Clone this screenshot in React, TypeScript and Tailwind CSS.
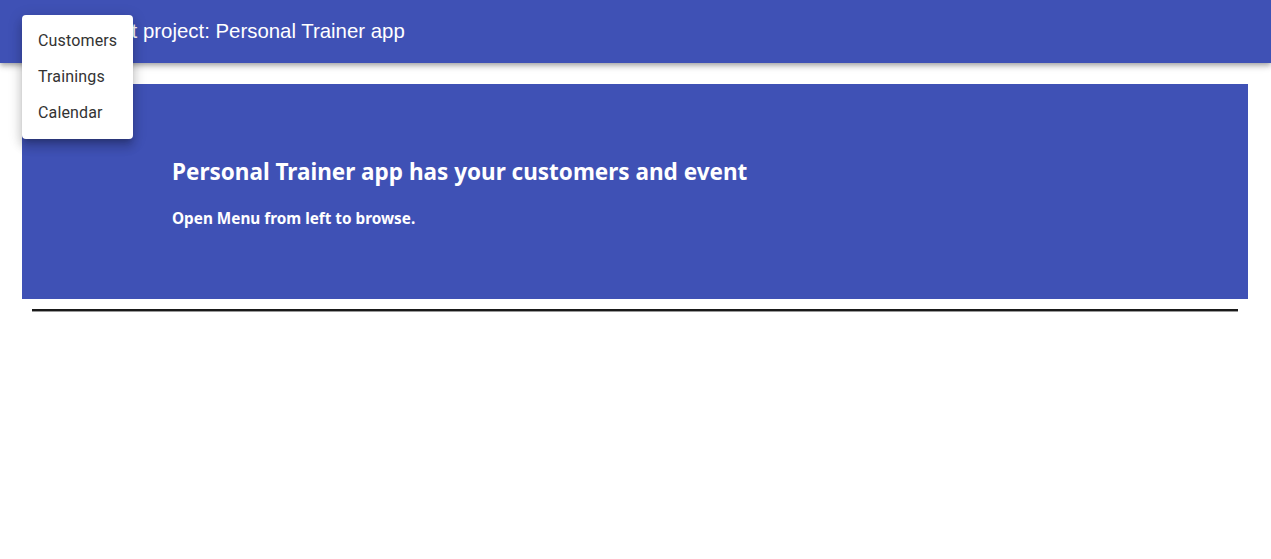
import React from "react";

export default function App() {
  return (
    <div className="relative min-h-[559px] bg-white" style={{ fontFamily: "Roboto, 'Liberation Sans', sans-serif" }}>
      <header className="h-[63px] bg-[#3f51b5] flex items-center px-6 shadow-[0_2px_4px_-1px_rgba(0,0,0,0.2),0_4px_5px_0_rgba(0,0,0,0.14),0_1px_10px_0_rgba(0,0,0,0.12)]">
        <div className="w-12 h-12 -ml-3 mr-4 flex items-center justify-center text-white">
          <svg width="24" height="24" viewBox="0 0 24 24" fill="currentColor"><path d="M3 18h18v-2H3v2zm0-5h18v-2H3v2zm0-7v2h18V6H3z" /></svg>
        </div>
        <h1 className="text-[20.4px] text-white font-normal ml-[8px]" style={{ fontFamily: "'Liberation Sans', Arial, sans-serif" }}>React project: Personal Trainer app</h1>
      </header>
      <div className="px-[22px] pt-[21px] pr-[23px]">
        <div className="h-[215px] bg-[#3f51b5] pl-[150px] pt-[73px] text-white" style={{ fontFamily: "'Noto Sans', 'Open Sans', sans-serif" }}>
          <h2 className="text-[22.5px] font-bold leading-[30px]">Personal Trainer app has your customers and event</h2>
          <p className="text-[15.3px] font-bold mt-[20px]">Open Menu from left to browse.</p>
        </div>
        <hr className="mt-[10px] mx-[10px] border-0 border-t-2 border-[#1a1a1a] shadow-[0_1px_0_#999]" />
      </div>
      <div className="absolute left-[22px] top-[15px] w-[111px] bg-white rounded py-2 shadow-[0_5px_5px_-3px_rgba(0,0,0,0.2),0_8px_10px_1px_rgba(0,0,0,0.14),0_3px_14px_2px_rgba(0,0,0,0.12)]">
        {["Customers", "Trainings", "Calendar"].map((t) => (
          <div key={t} className="h-9 px-4 flex items-center text-[16px] text-[#333] tracking-[0.15px]">{t}</div>
        ))}
      </div>
    </div>
  );
}
